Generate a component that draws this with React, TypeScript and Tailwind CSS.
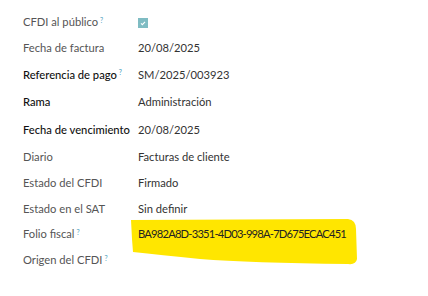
import React from 'react';

type Row = {
  label: string;
  value?: string;
  help?: boolean;
  dark?: boolean;
  check?: boolean;
  mark?: boolean;
  h: string;
};

const rows: Row[] = [
  { label: 'CFDI al público', help: true, check: true, h: 'h-[27px]' },
  { label: 'Fecha de factura', value: '20/08/2025', h: 'h-[25px]' },
  { label: 'Referencia de pago', value: 'SM/2025/003923', help: true, dark: true, h: 'h-[28px]' },
  { label: 'Rama', value: 'Administración', dark: true, h: 'h-[27px]' },
  { label: 'Fecha de vencimiento', value: '20/08/2025', dark: true, h: 'h-[28px]' },
  { label: 'Diario', value: 'Facturas de cliente', h: 'h-[27px]' },
  { label: 'Estado del CFDI', value: 'Firmado', h: 'h-[25px]' },
  { label: 'Estado en el SAT', value: 'Sin definir', h: 'h-[26px]' },
  { label: 'Folio fiscal', value: 'BA982A8D-3351-4D03-998A-7D675ECAC451', help: true, mark: true, h: 'h-[25px]' },
  { label: 'Origen del CFDI', help: true, h: 'h-[27px]' },
];

const Highlight = () => (
  <svg className="absolute left-[-8px] top-[-7px] w-[228px] h-[46px]" viewBox="0 0 228 46">
    <path
      d="M1 1 L218 0 Q226 1 226 10 L227 40 Q226 46 218 45 Q120 44 70 40 Q30 36 3 33 L2 20 Z"
      fill="#ffe600"
    />
  </svg>
);

export default function App() {
  return (
    <div className="w-[428px] h-[296px] bg-white pt-[9px] pl-[23px] text-[11.2px] font-['Lato',sans-serif]">
      {rows.map((r) => (
        <div key={r.label} className={`flex items-center ${r.h}`}>
          <div className={`w-[115px] whitespace-nowrap ${r.dark ? 'text-[#111] font-medium' : 'text-[#555]'}`}>
            {r.label}
            {r.help && <sup className="ml-[2px] text-[7px] text-[#4fa3c0]">?</sup>}
          </div>
          <div className="relative text-[#333] whitespace-nowrap">
            {r.mark && <Highlight />}
            {r.check && (
              <span className="flex items-center justify-center w-[10px] h-[10px] bg-[#7fbcc3]">
                <svg viewBox="0 0 10 10" className="w-[8px] h-[8px]">
                  <path d="M2.5 5.5 L4.2 7 L7.5 3.5" stroke="#fff" strokeWidth="1.4" fill="none" />
                </svg>
              </span>
            )}
            {r.value && (
              <span className={`relative ${r.mark ? 'tracking-[-0.8px] text-[#222]' : ''}`}>{r.value}</span>
            )}
          </div>
        </div>
      ))}
    </div>
  );
}
